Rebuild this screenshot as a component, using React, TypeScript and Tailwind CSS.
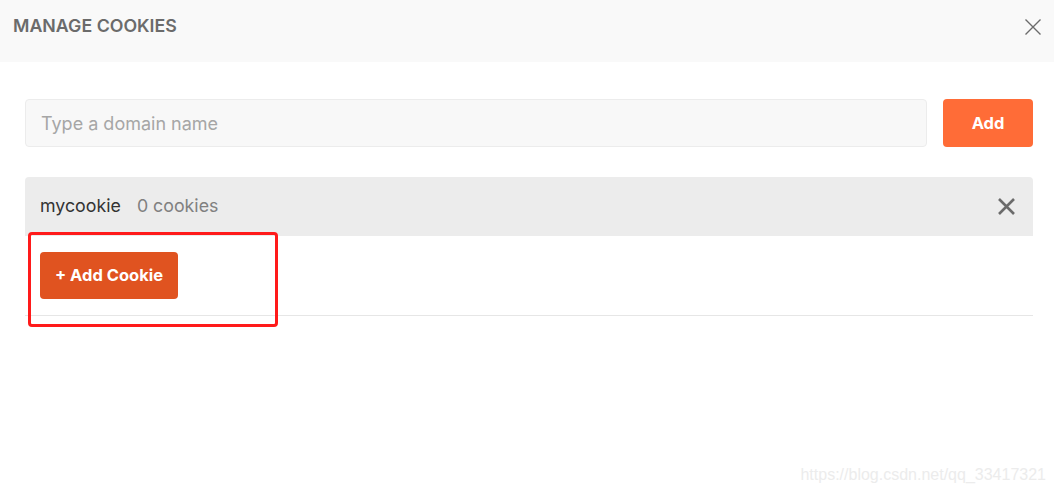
import React from 'react'

const App: React.FC = () => {
  return (
    <div className="relative w-[1054px] h-[493px] bg-white overflow-hidden font-['Inter',sans-serif]">
      {/* Header */}
      <div className="flex items-start justify-between h-[62px] bg-[#f9f9f9] pl-[13px] pr-[12px] pt-[15px]">
        <h1 className="text-[17.8px] leading-[22px] font-semibold text-[#6b6b6b]">MANAGE COOKIES</h1>
        <button className="w-[18px] h-[18px] mt-[3px] flex items-center justify-center text-[#6b6b6b]">
          <svg width="18" height="18" viewBox="0 0 18 18" fill="none" stroke="currentColor" strokeWidth="1.4">
            <path d="M1.5 1.5 L16.5 16.5 M16.5 1.5 L1.5 16.5" />
          </svg>
        </button>
      </div>

      {/* Body */}
      <div className="pl-[25px] pt-[37px] pr-[21px]">
        <div className="flex gap-[16px]">
          <input
            placeholder="Type a domain name"
            className="flex-1 h-[48px] rounded-[4px] bg-[#f8f8f8] border border-[#ececec] px-[15px] text-[18px] text-[#333] placeholder:text-[#a6a6a6] outline-none"
          />
          <button className="w-[90px] h-[48px] rounded-[4px] bg-[#ff6c37] text-white text-[16.5px] font-bold">
            Add
          </button>
        </div>

        <div className="mt-[30px] border-b border-[#e6e6e6]">
          <div className="flex items-center justify-between h-[59px] bg-[#ececec] rounded-t-[4px] pl-[15px] pr-[17px]">
            <div className="flex items-center gap-[16px] text-[17.8px]">
              <span className="text-[#333]">mycookie</span>
              <span className="text-[#808080]">0 cookies</span>
            </div>
            <svg width="19" height="19" viewBox="0 0 19 19" fill="none" stroke="#6b6b6b" strokeWidth="2.6">
              <path d="M2 2 L17 17 M17 2 L2 17" />
            </svg>
          </div>
          <div className="pl-[15px] pt-[16px] pb-[16px]">
            <button className="h-[47px] px-[15px] rounded-[4px] bg-[#e05320] text-white text-[16.5px] font-bold">
              + Add Cookie
            </button>
          </div>
        </div>
      </div>

      {/* Annotation box */}
      <div className="absolute left-[28px] top-[232px] w-[250px] h-[95px] border-[3px] border-[#ff1a1a] rounded-[4px] pointer-events-none" />

      {/* Watermark */}
      <div className="absolute right-[8px] top-[463px] text-[16px] text-[#ececec] font-['Liberation_Sans',sans-serif]">
        https://blog.csdn.net/qq_33417321
      </div>
    </div>
  )
}

export default App
